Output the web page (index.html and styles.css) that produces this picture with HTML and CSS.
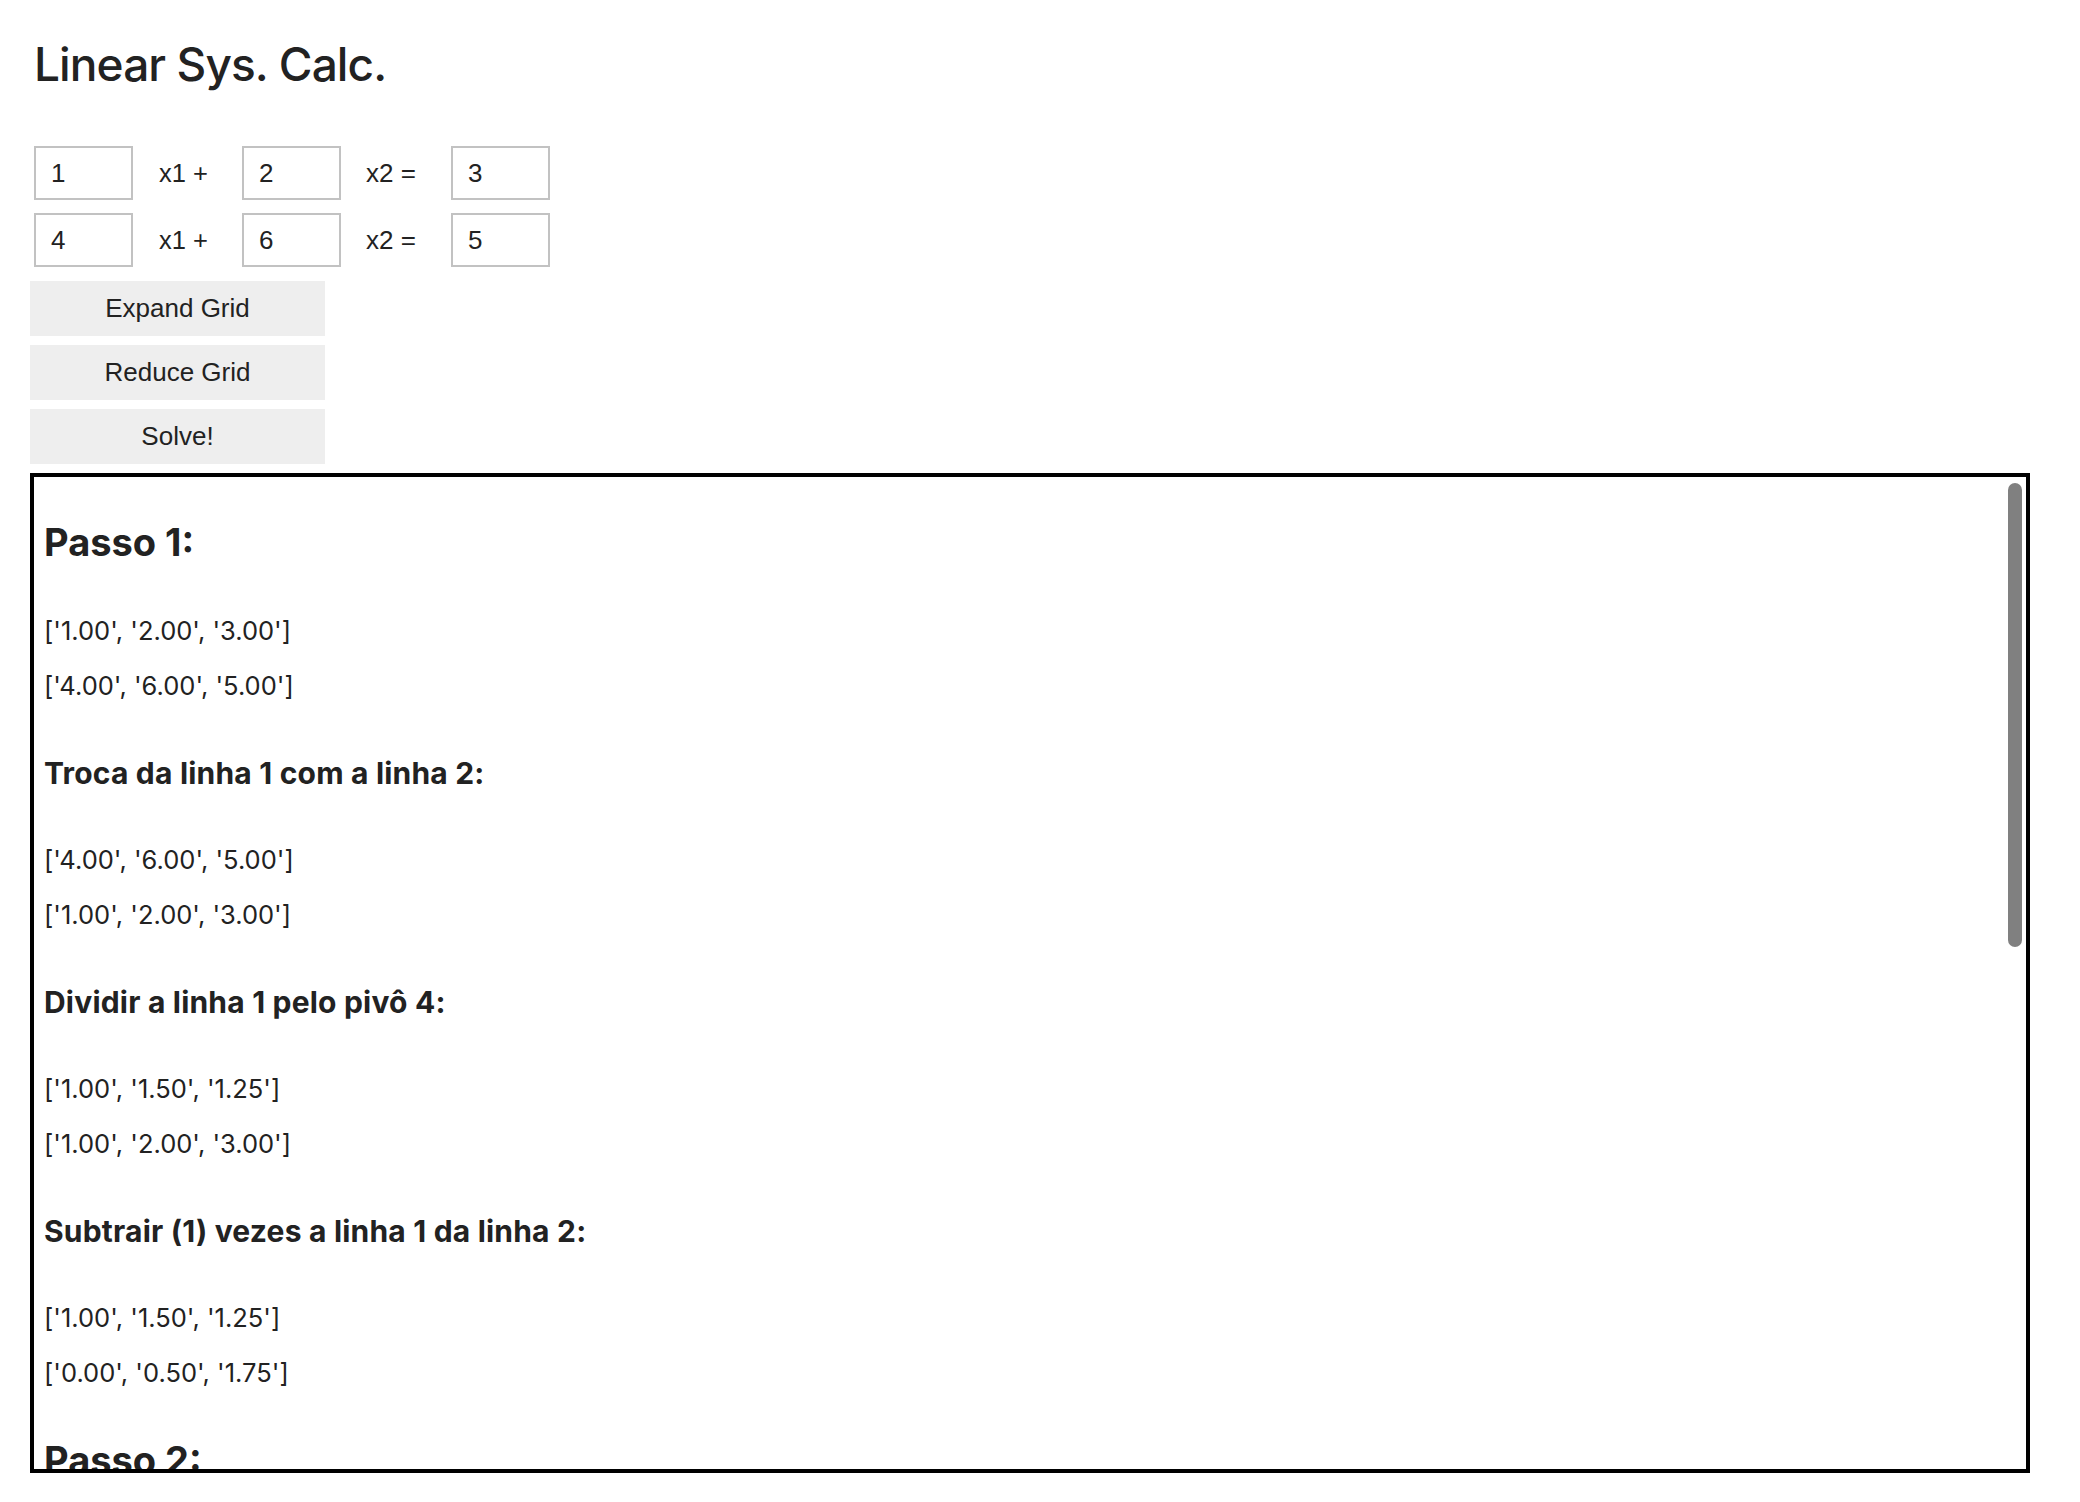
FILE: index.html
```html
<!DOCTYPE html>
<html lang="pt">
<head>
<meta charset="utf-8">
<title>Linear Sys. Calc.</title>
<link rel="stylesheet" href="styles.css">
</head>
<body>
<main class="page">
  <h1 class="title">Linear Sys. Calc.</h1>

  <div class="grid">
    <div class="eq-row">
      <input class="cell" type="text" value="1">
      <span class="lbl">x1 +</span>
      <input class="cell" type="text" value="2">
      <span class="lbl lbl-eq">x2 =</span>
      <input class="cell" type="text" value="3">
    </div>
    <div class="eq-row">
      <input class="cell" type="text" value="4">
      <span class="lbl">x1 +</span>
      <input class="cell" type="text" value="6">
      <span class="lbl lbl-eq">x2 =</span>
      <input class="cell" type="text" value="5">
    </div>
  </div>

  <div class="actions">
    <button class="btn" type="button">Expand Grid</button>
    <button class="btn" type="button">Reduce Grid</button>
    <button class="btn" type="button">Solve!</button>
  </div>

  <div class="output-wrap">
    <div class="output">
      <h2 class="h2">Passo 1:</h2>
      <p class="row">['1.00', '2.00', '3.00']</p>
      <p class="row">['4.00', '6.00', '5.00']</p>
      <h3 class="h3">Troca da linha 1 com a linha 2:</h3>
      <p class="row">['4.00', '6.00', '5.00']</p>
      <p class="row">['1.00', '2.00', '3.00']</p>
      <h3 class="h3">Dividir a linha 1 pelo pivô 4:</h3>
      <p class="row">['1.00', '1.50', '1.25']</p>
      <p class="row">['1.00', '2.00', '3.00']</p>
      <h3 class="h3">Subtrair (1) vezes a linha 1 da linha 2:</h3>
      <p class="row">['1.00', '1.50', '1.25']</p>
      <p class="row">['0.00', '0.50', '1.75']</p>

      <h2 class="h2">Passo 2:</h2>
      <p class="row">['1.00', '1.50', '1.25']</p>
      <p class="row">['0.00', '0.50', '1.75']</p>
      <h3 class="h3">Dividir a linha 2 pelo pivô 0.5:</h3>
      <p class="row">['1.00', '1.50', '1.25']</p>
      <p class="row">['0.00', '1.00', '3.50']</p>
      <h3 class="h3">Subtrair (1.5) vezes a linha 2 da linha 1:</h3>
      <p class="row">['1.00', '0.00', '-4.00']</p>
      <p class="row">['0.00', '1.00', '3.50']</p>

      <h2 class="h2">Resultado:</h2>
      <p class="row">x1 = -4.00</p>
      <p class="row">x2 = 3.50</p>
    </div>
    <div class="thumb" aria-hidden="true"></div>
  </div>
</main>
</body>
</html>
```

FILE: styles.css
```css
html, body {
  margin: 0;
  padding: 0;
  background: #ffffff;
}

body {
  color: #222222;
  font-family: Inter, "Noto Sans", sans-serif;
}

.page {
  padding-left: 30px;
}

.title {
  margin: 36px 0 0 4px;
  font-family: Inter, "Noto Sans", sans-serif;
  font-size: 46px;
  line-height: 56px;
  font-weight: 500;
  letter-spacing: -0.9px;
  color: #222222;
}

.grid {
  margin: 54px 0 0 4px;
  display: flex;
  flex-direction: column;
  gap: 13px;
}

.eq-row {
  display: flex;
  align-items: center;
  height: 54px;
}

.cell {
  box-sizing: border-box;
  width: 99px;
  height: 54px;
  margin: 0;
  padding: 0 15px;
  border: 2px solid #c2c2c2;
  border-radius: 0;
  background: #ffffff;
  color: #222222;
  font-family: "Liberation Sans", Arial, sans-serif;
  font-size: 26px;
  outline: none;
}

.lbl {
  box-sizing: border-box;
  width: 109px;
  padding-left: 26px;
  font-family: "Liberation Sans", Arial, sans-serif;
  font-size: 25.5px;
  color: #222222;
}

.lbl-eq {
  width: 110px;
  padding-left: 25px;
  font-size: 26px;
}

.actions {
  margin-top: 14px;
  display: flex;
  flex-direction: column;
  align-items: flex-start;
  gap: 9px;
}

.btn {
  width: 295px;
  height: 55px;
  margin: 0;
  padding: 0;
  border: none;
  border-radius: 0;
  background: #eeeeee;
  color: #222222;
  font-family: "Liberation Sans", Arial, sans-serif;
  font-size: 26px;
  cursor: pointer;
}

.output-wrap {
  position: relative;
  margin-top: 9px;
  width: 2000px;
  height: 1000px;
}

.output {
  box-sizing: border-box;
  width: 100%;
  height: 100%;
  border: 4px solid #000000;
  overflow-y: auto;
  scrollbar-width: none;
  display: flex;
  flex-direction: column;
  align-items: flex-start;
  padding: 42px 10px 14px 10px;
}

.thumb {
  position: absolute;
  top: 10px;
  right: 8px;
  width: 14px;
  height: 464px;
  border-radius: 7px;
  background: #808080;
}

.h2 {
  margin: 0;
  font-size: 38px;
  line-height: 46px;
  font-weight: 700;
}

.h3 {
  margin: 0;
  font-size: 30px;
  line-height: 35px;
  font-weight: 700;
  letter-spacing: 0.2px;
}

.row {
  margin: 0;
  font-size: 25.5px;
  line-height: 30px;
  font-weight: 400;
}

.h2 + .row { margin-top: 51px; }
.row + .row { margin-top: 25px; }
.row + .h3 { margin-top: 55px; }
.h3 + .row { margin-top: 54px; }
.row + .h2 { margin-top: 49px; }
```
